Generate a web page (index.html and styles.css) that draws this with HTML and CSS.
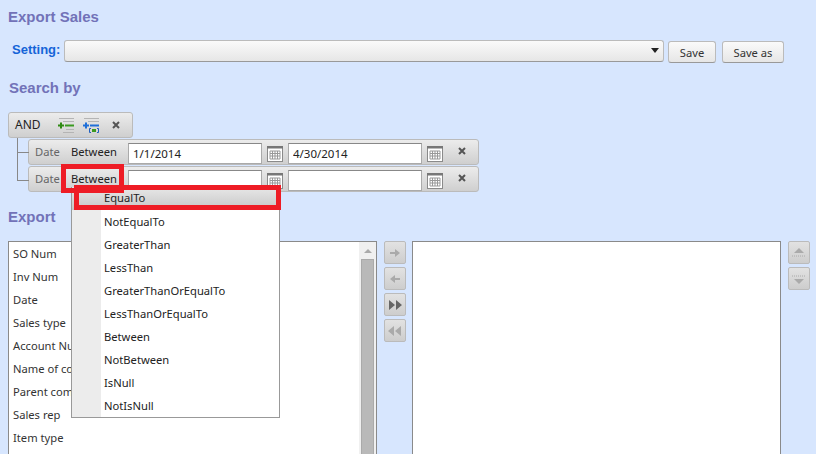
FILE: index.html
```html
<!DOCTYPE html>
<html lang="en">
<head>
  <meta charset="UTF-8">
  <title>Export Sales</title>
  <link rel="stylesheet" href="styles.css">
</head>
<body>
  <div class="page">
    <h2 class="title">Export Sales</h2>

    <div class="setting">
      <label class="setting-label">Setting:</label>
      <div class="select"><span class="select-arrow"></span></div>
      <button class="btn btn-save">Save</button>
      <button class="btn btn-saveas">Save as</button>
    </div>

    <h2 class="title title-search">Search by</h2>

    <div class="filter-group">
      <span class="group-name">AND</span>
      <svg class="group-icon" width="16" height="15" viewBox="0 0 16 15">
        <path d="M1 .5h15M5 3.500h11M8 11.500h8M5 14.500h11" stroke="#b4b4b4"/>
        <path d="M7 7.500h9" stroke="#3a9a20" stroke-width="2"/>
        <path d="M0 7.500h6M3 4.500v6" stroke="#2f8a12" stroke-width="2"/>
      </svg>
      <svg class="group-icon group-icon-2" width="16" height="15" viewBox="0 0 16 15">
        <path d="M1 .5h15M5 3.500h11" stroke="#b4b4b4"/>
        <path d="M7 7.500h9" stroke="#1f6fd8" stroke-width="2"/>
        <path d="M0 7.500h6M3 4.500v6" stroke="#1f6fd8" stroke-width="2"/>
        <path d="M8 10.500H6.500v4H8M14 10.500h1.500v4H14" fill="none" stroke="#1f5fc0"/>
        <path d="M9 11h4v3H9z" fill="#3a9a20"/>
      </svg>
      <svg class="close" width="8" height="8" viewBox="0 0 8 8"><path d="M1 1l6 6M7 1L1 7" stroke="#555" stroke-width="2"/></svg>
    </div>

    <div class="filter-rows">
      <div class="filter-row">
        <span class="field">Date</span>
        <span class="operator">Between</span>
        <input class="date-input" type="text" value="1/1/2014">
        <svg class="cal" width="16" height="16" viewBox="0 0 16 16"><use href="#cal-icon"/></svg>
        <input class="date-input" type="text" value="4/30/2014">
        <svg class="cal" width="16" height="16" viewBox="0 0 16 16"><use href="#cal-icon"/></svg>
        <svg class="close close-row" width="8" height="8" viewBox="0 0 8 8"><path d="M1 1l6 6M7 1L1 7" stroke="#555" stroke-width="2"/></svg>
      </div>
      <div class="filter-row">
        <span class="field">Date</span>
        <span class="operator">Between</span>
        <input class="date-input" type="text">
        <svg class="cal" width="16" height="16" viewBox="0 0 16 16"><use href="#cal-icon"/></svg>
        <input class="date-input" type="text">
        <svg class="cal" width="16" height="16" viewBox="0 0 16 16"><use href="#cal-icon"/></svg>
        <svg class="close close-row" width="8" height="8" viewBox="0 0 8 8"><path d="M1 1l6 6M7 1L1 7" stroke="#555" stroke-width="2"/></svg>
      </div>
    </div>

    <h2 class="title title-export">Export</h2>

    <div class="export">
      <div class="list list-left">
        <ul class="list-items">
          <li>SO Num</li>
          <li>Inv Num</li>
          <li>Date</li>
          <li>Sales type</li>
          <li>Account Number</li>
          <li>Name of company</li>
          <li>Parent company</li>
          <li>Sales rep</li>
          <li>Item type</li>
        </ul>
        <div class="scrollbar">
          <span class="scroll-up"></span>
          <span class="scroll-thumb"></span>
        </div>
      </div>

      <div class="move-btns">
        <button class="tool-btn"><svg width="18" height="18" viewBox="0 0 18 18"><path d="M4 8h5V5l5 4-5 4v-3H4z" fill="#aaa"/></svg></button>
        <button class="tool-btn"><svg width="18" height="18" viewBox="0 0 18 18"><path d="M14 8H9V5L4 9l5 4v-3h5z" fill="#aaa"/></svg></button>
        <button class="tool-btn"><svg width="18" height="18" viewBox="0 0 18 18"><path d="M3 4l6 5-6 5zM10 4l6 5-6 5z" fill="#666"/></svg></button>
        <button class="tool-btn"><svg width="18" height="18" viewBox="0 0 18 18"><path d="M8 4L2 9l6 5zM15 4L9 9l6 5z" fill="#aaa"/></svg></button>
      </div>

      <div class="list list-right"></div>

      <div class="move-btns move-btns-right">
        <button class="tool-btn"><svg width="18" height="18" viewBox="0 0 18 18"><path d="M9 4l5 5H4z" fill="#aaa"/><path d="M2 12h14" stroke="#aaa" stroke-dasharray="1 1"/></svg></button>
        <button class="tool-btn"><svg width="18" height="18" viewBox="0 0 18 18"><path d="M2 6h14" stroke="#aaa" stroke-dasharray="1 1"/><path d="M9 14L4 9h10z" fill="#aaa"/></svg></button>
      </div>
    </div>

    <!-- operator menu opened over the page -->
    <ul class="menu">
      <li class="menu-active">EqualTo</li>
      <li>NotEqualTo</li>
      <li>GreaterThan</li>
      <li>LessThan</li>
      <li>GreaterThanOrEqualTo</li>
      <li>LessThanOrEqualTo</li>
      <li>Between</li>
      <li>NotBetween</li>
      <li>IsNull</li>
      <li>NotIsNull</li>
    </ul>

    <div class="mark mark-operator"></div>
    <div class="mark mark-item"></div>
  </div>

  <svg width="0" height="0" class="defs">
    <symbol id="cal-icon" viewBox="0 0 16 16">
      <rect x="0.500" y="0.500" width="15" height="15" fill="#fff" stroke="#8a8a8a"/>
      <rect x="0" y="0" width="16" height="2.500" fill="#777"/>
      <path d="M3 5h10v8H3zM5.500 5v8M8 5v8M10.500 5v8M3 7.500h10M3 10h10" fill="none" stroke="#999"/>
    </symbol>
  </svg>
</body>
</html>
```

FILE: styles.css
```css
* {
  box-sizing: border-box;
}
html, body {
  margin: 0;
  padding: 0;
  height: 100%;
  overflow: hidden;
}
body {
  background-color: #d7e6fe;
  font-family: "Noto Sans", Tahoma, sans-serif;
  font-size: 11.2px;
  color: #222;
}
.page {
  position: relative;
  height: 454px;
  overflow: hidden;
  padding: 8px 0 0 8px;
}
.defs {
  position: absolute;
}
.title {
  margin: 0;
  font-family: "Liberation Sans", Arial, sans-serif;
  font-size: 15px;
  line-height: 17px;
  font-weight: bold;
  color: #7272b8;
}
.title-search {
  margin-top: 16px;
  margin-left: 1px;
}
.title-export {
  margin-top: 16px;
}

.setting {
  display: flex;
  align-items: flex-start;
  margin-top: 15px;
  height: 23px;
}
.setting-label {
  width: 52px;
  margin-left: 4px;
  font-family: "Liberation Sans", Arial, sans-serif;
  font-size: 13px;
  font-weight: bold;
  line-height: 20px;
  color: #1464d8;
}
.select {
  position: relative;
  width: 600px;
  height: 22px;
  border: 1px solid #bbb;
  border-bottom-color: #999;
  border-radius: 3px;
  background: linear-gradient(#fafafa, #e6e6e6);
}
.select-arrow {
  position: absolute;
  right: 4px;
  top: 7px;
  border-left: 4px solid transparent;
  border-right: 4px solid transparent;
  border-top: 5px solid #222;
}
.btn {
  height: 22px;
  margin-top: 1px;
  padding: 0;
  border: 1px solid #bbb;
  border-bottom-color: #999;
  border-radius: 3px;
  background: linear-gradient(#fafafa, #e6e6e6);
  font-family: inherit;
  font-size: 11.2px;
  color: #333;
}
.btn-save {
  width: 48px;
  margin-left: 4px;
}
.btn-saveas {
  width: 62px;
  margin-left: 6px;
}

.filter-group {
  display: flex;
  align-items: center;
  width: 125px;
  height: 26px;
  margin-top: 16px;
  padding-left: 6px;
  border: 1px solid #bbb;
  border-radius: 3px;
  background: linear-gradient(#ececec, #cfcfcf);
}
.group-name {
  width: 43px;
  margin-bottom: 2px;
  font-size: 12px;
  color: #222;
}
.group-icon {
  flex: none;
}
.group-icon-2 {
  margin-left: 9px;
}
.close {
  flex: none;
  margin-left: 13px;
}

.filter-rows {
  position: relative;
  margin: 1px 0 0 20px;
}
/* tree lines */
.filter-rows::before {
  content: "";
  position: absolute;
  left: -11px;
  top: -1px;
  width: 11px;
  height: 14px;
  border-left: 1px solid #888;
  border-bottom: 1px solid #888;
}
.filter-rows::after {
  content: "";
  position: absolute;
  left: -11px;
  top: 13px;
  width: 11px;
  height: 28px;
  border-left: 1px solid #888;
  border-bottom: 1px solid #888;
}
.filter-row {
  display: flex;
  align-items: center;
  width: 451px;
  height: 26px;
  margin-bottom: 1px;
  padding-left: 6px;
  border: 1px solid #bbb;
  border-radius: 3px;
  background: linear-gradient(#ececec, #cfcfcf);
}
.field {
  width: 36px;
  margin-bottom: 2px;
  color: #666;
}
.operator {
  width: 57px;
  margin-bottom: 2px;
  color: #222;
}
.date-input {
  width: 134px;
  height: 21px;
  margin: 2px 5px 0 0;
  padding: 2px 4px;
  border: 1px solid #aaa;
  border-top-color: #888;
  background: #fff;
  font-family: inherit;
  font-size: 11.5px;
  color: #222;
  outline: none;
}
.cal {
  flex: none;
  margin: 3px 5px 0 0;
}
.close-row {
  margin: 0 0 2px 10px;
}

.export {
  display: flex;
  align-items: flex-start;
  margin-top: 16px;
  height: 260px;
}
.list {
  height: 260px;
  border: 1px solid #8a8a8a;
  background: #fff;
}
.list-left {
  display: flex;
  width: 369px;
}
.list-items {
  flex: 1;
  margin: 0;
  padding: 0;
  list-style: none;
}
.list-items li {
  height: 23px;
  padding-left: 4px;
  line-height: 23px;
  color: #333;
}
.scrollbar {
  position: relative;
  flex: none;
  width: 17px;
  background: #f0f0f0;
}
.scroll-up {
  position: absolute;
  left: 5px;
  top: 7px;
  border-left: 4px solid transparent;
  border-right: 4px solid transparent;
  border-bottom: 4px solid #aaa;
}
.scroll-thumb {
  position: absolute;
  left: 2px;
  top: 17px;
  width: 13px;
  height: 260px;
  background: #b9b9b9;
  border: 1px solid #aaa;
}
.move-btns {
  display: flex;
  flex-direction: column;
  gap: 3px;
  width: 22px;
  margin: 0 6px 0 7px;
}
.move-btns-right {
  margin: 0 0 0 7px;
}
.tool-btn {
  display: flex;
  align-items: center;
  justify-content: center;
  width: 22px;
  height: 23px;
  padding: 0;
  border: 1px solid #bbb;
  border-radius: 2px;
  background: linear-gradient(#e2e2e2, #cdcdcd);
}
.list-right {
  width: 369px;
}

.menu {
  position: absolute;
  left: 71px;
  top: 187px;
  width: 209px;
  margin: 0;
  padding: 0;
  list-style: none;
  border: 1px solid #999;
  border-top: none;
  background: linear-gradient(to right, #ececec 29px, #fff 29px);
}
.menu li {
  height: 23px;
  padding-left: 32px;
  line-height: 23px;
  color: #222;
}
.menu .menu-active {
  height: 23px;
  line-height: 22px;
  background: linear-gradient(#e8e8e8, #c6c6c6);
}
.mark {
  position: absolute;
  border-style: solid;
  border-color: #ee1c25;
}
.mark-operator {
  left: 61px;
  top: 164px;
  width: 63px;
  height: 29px;
  border-width: 5px;
}
.mark-item {
  left: 74px;
  top: 185px;
  width: 207px;
  height: 25px;
  border-width: 5px;
}
```
